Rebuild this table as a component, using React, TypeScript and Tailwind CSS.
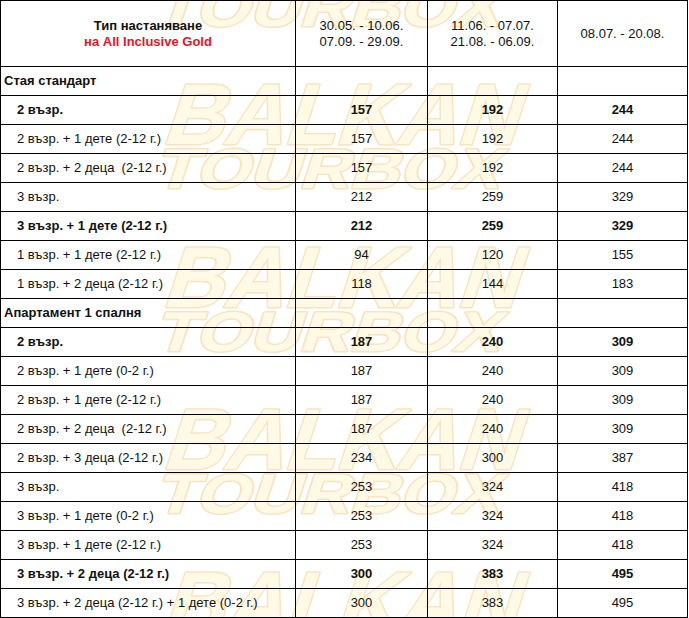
import React from "react";

type Row =
  | { kind: "group"; label: string }
  | { kind: "price"; label: string; bold?: boolean; prices: [number, number, number] };

const rows: Row[] = [
  { kind: "group", label: "Стая стандарт" },
  { kind: "price", label: "2 възр.", bold: true, prices: [157, 192, 244] },
  { kind: "price", label: "2 възр. + 1 дете (2-12 г.)", prices: [157, 192, 244] },
  { kind: "price", label: "2 възр. + 2 деца  (2-12 г.)", prices: [157, 192, 244] },
  { kind: "price", label: "3 възр.", prices: [212, 259, 329] },
  { kind: "price", label: "3 възр. + 1 дете (2-12 г.)", bold: true, prices: [212, 259, 329] },
  { kind: "price", label: "1 възр. + 1 дете (2-12 г.)", prices: [94, 120, 155] },
  { kind: "price", label: "1 възр. + 2 деца (2-12 г.)", prices: [118, 144, 183] },
  { kind: "group", label: "Апартамент 1 спалня" },
  { kind: "price", label: "2 възр.", bold: true, prices: [187, 240, 309] },
  { kind: "price", label: "2 възр. + 1 дете (0-2 г.)", prices: [187, 240, 309] },
  { kind: "price", label: "2 възр. + 1 дете (2-12 г.)", prices: [187, 240, 309] },
  { kind: "price", label: "2 възр. + 2 деца  (2-12 г.)", prices: [187, 240, 309] },
  { kind: "price", label: "2 възр. + 3 деца (2-12 г.)", prices: [234, 300, 387] },
  { kind: "price", label: "3 възр.", prices: [253, 324, 418] },
  { kind: "price", label: "3 възр. + 1 дете (0-2 г.)", prices: [253, 324, 418] },
  { kind: "price", label: "3 възр. + 1 дете (2-12 г.)", prices: [253, 324, 418] },
  { kind: "price", label: "3 възр. + 2 деца (2-12 г.)", bold: true, prices: [300, 383, 495] },
  { kind: "price", label: "3 възр. + 2 деца (2-12 г.) + 1 дете (0-2 г.)", prices: [300, 383, 495] },
];

// faint "BALKAN TOURBOX" background stamp, repeated down the page
const Watermark = () => {
  const offsets = [-162.5, 0, 162.5, 325, 487.5];
  return (
    <svg
      className="absolute inset-0 pointer-events-none"
      width="689"
      height="618"
      viewBox="0 0 689 618"
    >
      {offsets.map((dy, i) => (
        <g
          key={i}
          fill="#fffae6"
          stroke="#f9e3c0"
          strokeWidth="3"
          strokeLinejoin="round"
          paintOrder="stroke"
        >
          <g transform={`translate(161 ${144 + dy}) skewX(-18)`}>
            <text
              x="0"
              y="0"
              fontFamily="'Liberation Sans', Arial, sans-serif"
              fontWeight="bold"
              fontSize="86"
              textLength="355"
              lengthAdjust="spacingAndGlyphs"
            >
              BALKAN
            </text>
          </g>
          <g transform={`translate(153 ${188 + dy}) skewX(-18)`}>
            <text
              x="0"
              y="0"
              fontFamily="'Liberation Sans', Arial, sans-serif"
              fontWeight="bold"
              fontSize="56"
              textLength="345"
              lengthAdjust="spacingAndGlyphs"
            >
              TOURBOX
            </text>
          </g>
        </g>
      ))}
    </svg>
  );
};

const cell = "border-r border-b border-black flex items-center";

export default function App() {
  return (
    <div className="relative w-[689px] h-[618px] bg-white overflow-hidden font-['Liberation_Sans',Arial,sans-serif] text-[13px] text-[#111]">
      <Watermark />
      <div className="relative grid grid-cols-[295px_132px_130px_130px] w-[688px] border-l border-t border-black">
        {/* header */}
        <div className={`${cell} h-[66px] flex-col justify-center text-center font-bold leading-[16px]`}>
          <span>Тип настаняване</span>
          <span className="text-[#e0162b]">на All Inclusive Gold</span>
        </div>
        <div className={`${cell} h-[66px] flex-col justify-center text-center leading-[16px]`}>
          <span>30.05. - 10.06.</span>
          <span>07.09. - 29.09.</span>
        </div>
        <div className={`${cell} h-[66px] flex-col justify-center text-center leading-[16px]`}>
          <span>11.06. - 07.07.</span>
          <span>21.08. - 06.09.</span>
        </div>
        <div className={`${cell} h-[66px] justify-center`}>08.07. - 20.08.</div>

        {rows.map((r, i) =>
          r.kind === "group" ? (
            <React.Fragment key={i}>
              <div className={`${cell} h-[29px] pl-[3px] font-bold`}>{r.label}</div>
              <div className={`${cell} h-[29px]`} />
              <div className={`${cell} h-[29px]`} />
              <div className={`${cell} h-[29px]`} />
            </React.Fragment>
          ) : (
            <React.Fragment key={i}>
              <div className={`${cell} h-[29px] pl-[16px] whitespace-pre ${r.bold ? "font-bold" : ""}`}>
                {r.label}
              </div>
              {r.prices.map((p, j) => (
                <div key={j} className={`${cell} h-[29px] justify-center ${r.bold ? "font-bold" : ""}`}>
                  {p}
                </div>
              ))}
            </React.Fragment>
          )
        )}
      </div>
    </div>
  );
}
